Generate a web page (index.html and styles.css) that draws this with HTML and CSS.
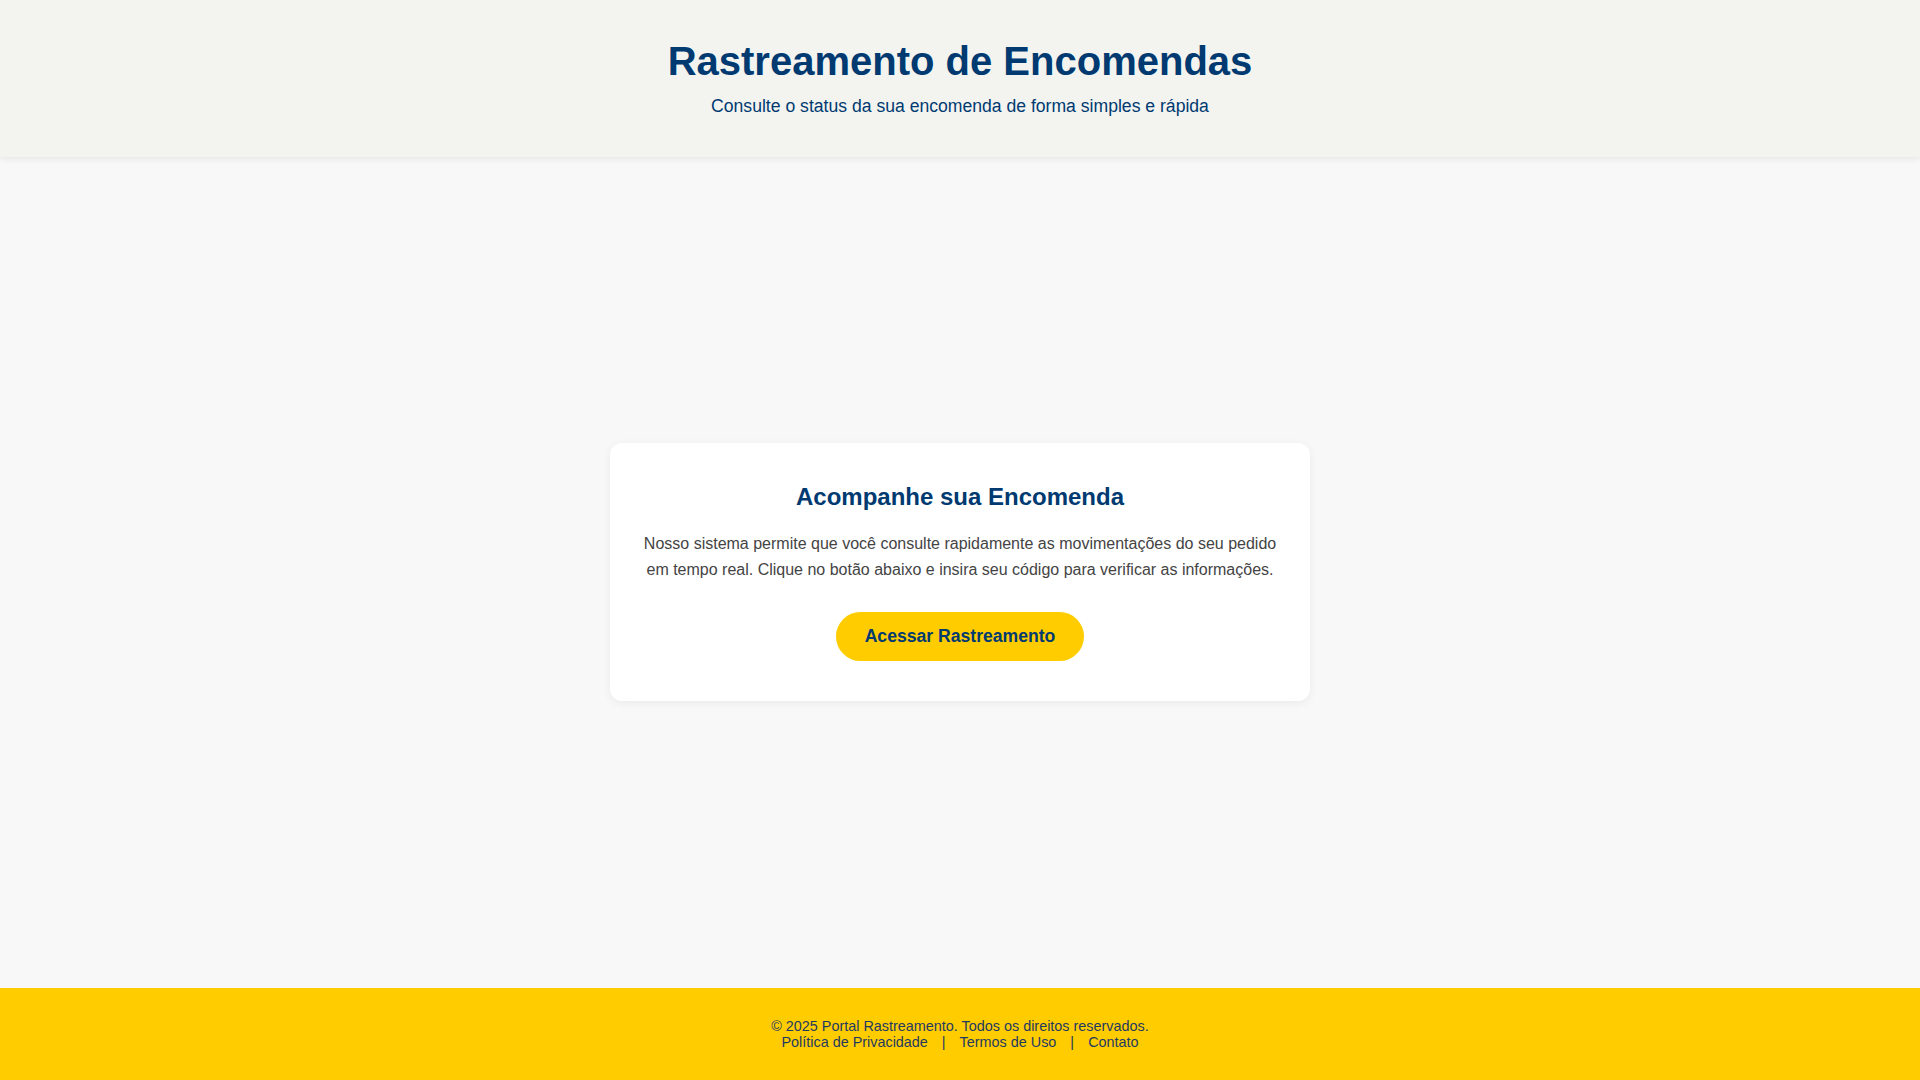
FILE: index.html
```html
<!DOCTYPE html>
<html lang="pt-BR">
<head>
<meta charset="UTF-8">
<title>Rastreamento de Encomendas</title>
<link rel="stylesheet" href="styles.css">
</head>
<body>
<header class="site-header">
  <h1 class="site-title">Rastreamento de Encomendas</h1>
  <p class="site-subtitle">Consulte o status da sua encomenda de forma simples e rápida</p>
</header>
<main class="main">
  <section class="card">
    <h2 class="card-title">Acompanhe sua Encomenda</h2>
    <p class="card-text">Nosso sistema permite que você consulte rapidamente as movimentações do seu pedido em tempo real. Clique no botão abaixo e insira seu código para verificar as informações.</p>
    <a class="btn" href="#">Acessar Rastreamento</a>
  </section>
</main>
<footer class="site-footer">
  <p class="footer-copy">© 2025 Portal Rastreamento. Todos os direitos reservados.</p>
  <p class="footer-links"><a href="#">Política de Privacidade</a> | <a href="#">Termos de Uso</a> | <a href="#">Contato</a></p>
</footer>
</body>
</html>
```
FILE: styles.css
```css
* { box-sizing: border-box; }
html, body { height: 100%; }
body {
  margin: 0;
  font-family: "Liberation Sans", Arial, sans-serif;
  background: #f8f8f8;
  color: #444;
  display: flex;
  flex-direction: column;
  min-height: 100vh;
}
.site-header {
  background: #f3f4f0;
  text-align: center;
  padding: 39px 16px 40px;
  box-shadow: 0 2px 6px rgba(0, 0, 0, 0.08);
  position: relative;
  z-index: 1;
}
.site-title {
  margin: 0 0 11.5px;
  font-size: 40px;
  font-weight: bold;
  color: #003a70;
}
.site-subtitle {
  margin: 0;
  font-size: 17.6px;
  color: #003a70;
}
.main {
  flex: 1;
  display: flex;
  align-items: center;
  justify-content: center;
  padding: 0 16px;
}
.card {
  width: 700px;
  background: #fff;
  border-radius: 12px;
  padding: 40px 32px;
  box-shadow: 0 2px 10px rgba(0, 0, 0, 0.06);
  text-align: center;
}
.card-title {
  margin: 0 0 19.5px;
  font-size: 24px;
  font-weight: bold;
  color: #003a70;
}
.card-text {
  margin: 0 0 28px;
  font-size: 16px;
  line-height: 1.65;
  color: #444;
}
.btn {
  display: inline-block;
  background: #ffcc00;
  color: #003a70;
  font-size: 17.6px;
  font-weight: bold;
  text-decoration: none;
  padding: 14.4px 28.8px;
  border-radius: 50px;
}
.site-footer {
  background: #ffcc00;
  text-align: center;
  padding: 30px 16px;
  font-size: 14.4px;
  color: #1f3a60;
}
.site-footer p { margin: 0; }
.footer-links a {
  color: #1f3a60;
  text-decoration: none;
  margin: 0 10px;
}
```
